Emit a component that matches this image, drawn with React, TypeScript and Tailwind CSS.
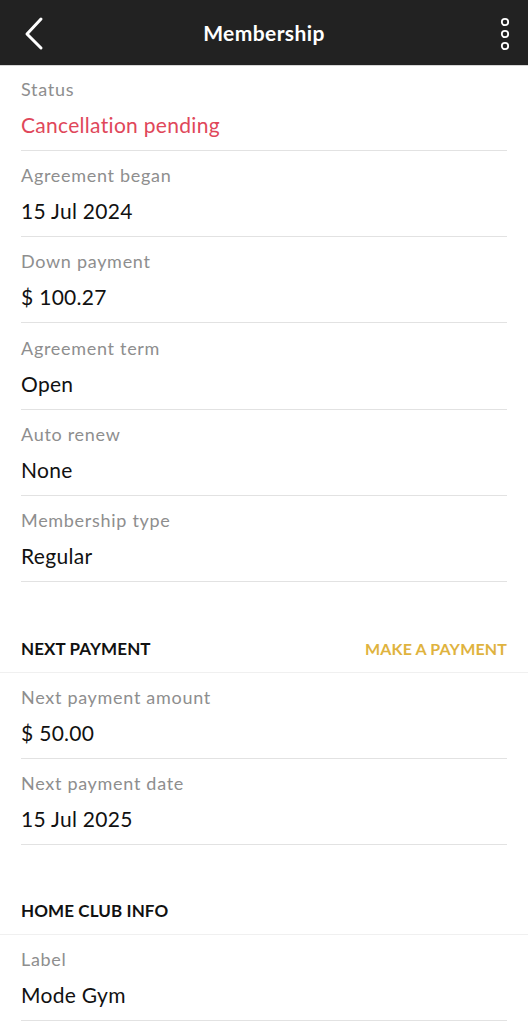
import React from "react";

const font = { fontFamily: "Lato, 'Open Sans', sans-serif" };

function Row({ label, value, red }: { label: string; value: string; red?: boolean }) {
  return (
    <div className="px-[21px]">
      <div className="pt-[13px] pb-[12px]">
        <div className="text-[18px] leading-[22px] text-[#8e8e8e] tracking-[0.7px]">{label}</div>
        <div className={`mt-[12px] text-[21px] leading-[26px] tracking-[0.3px] ${red ? "text-[#e0475a]" : "text-[#111111]"}`}>{value}</div>
      </div>
      <div className="h-px bg-[#e2e2e2]" />
    </div>
  );
}

function Section({ title, action }: { title: string; action?: string }) {
  return (
    <div className="h-[91px] flex items-end justify-between px-[21px] pb-[13px] border-b border-[#f0f0f0]">
      <div className="text-[17px] leading-[20px] font-bold text-[#111111] tracking-[0.1px]">{title}</div>
      {action && <div className="text-[16px] leading-[20px] font-bold text-[#dfb33e] tracking-[0.15px]">{action}</div>}
    </div>
  );
}

export default function App() {
  return (
    <div className="w-[528px] h-[1024px] overflow-hidden bg-white" style={font}>
      <div className="h-[65px] bg-[#222222] flex items-center justify-between px-[20px] relative">
        <svg width="26" height="36" viewBox="0 0 26 36" className="ml-[1px]">
          <path d="M20 4 L6 19 L20 33" stroke="white" strokeWidth="3" fill="none" strokeLinecap="round" strokeLinejoin="round" />
        </svg>
        <div className="absolute left-0 right-0 text-center text-white font-bold text-[21px] tracking-[0.4px] pointer-events-none">Membership</div>
        <svg width="12" height="36" viewBox="0 0 12 36" className="mr-[-3px]">
          <circle cx="6" cy="7" r="3.2" stroke="white" strokeWidth="1.8" fill="none" />
          <circle cx="6" cy="19" r="3.2" stroke="white" strokeWidth="1.8" fill="none" />
          <circle cx="6" cy="31" r="3.2" stroke="white" strokeWidth="1.8" fill="none" />
        </svg>
      </div>
      <div className="h-px bg-[#d6d6d6]" />
      <div className="-mt-[1px]">
        <Row label="Status" value="Cancellation pending" red />
      </div>
      <Row label="Agreement began" value="15 Jul 2024" />
      <Row label="Down payment" value="$ 100.27" />
      <div className="pt-px">
        <Row label="Agreement term" value="Open" />
      </div>
      <Row label="Auto renew" value="None" />
      <Row label="Membership type" value="Regular" />
      <Section title="NEXT PAYMENT" action="MAKE A PAYMENT" />
      <Row label="Next payment amount" value="$ 50.00" />
      <Row label="Next payment date" value="15 Jul 2025" />
      <div className="-mt-px">
        <Section title="HOME CLUB INFO" />
      </div>
      <Row label="Label" value="Mode Gym" />
    </div>
  );
}
